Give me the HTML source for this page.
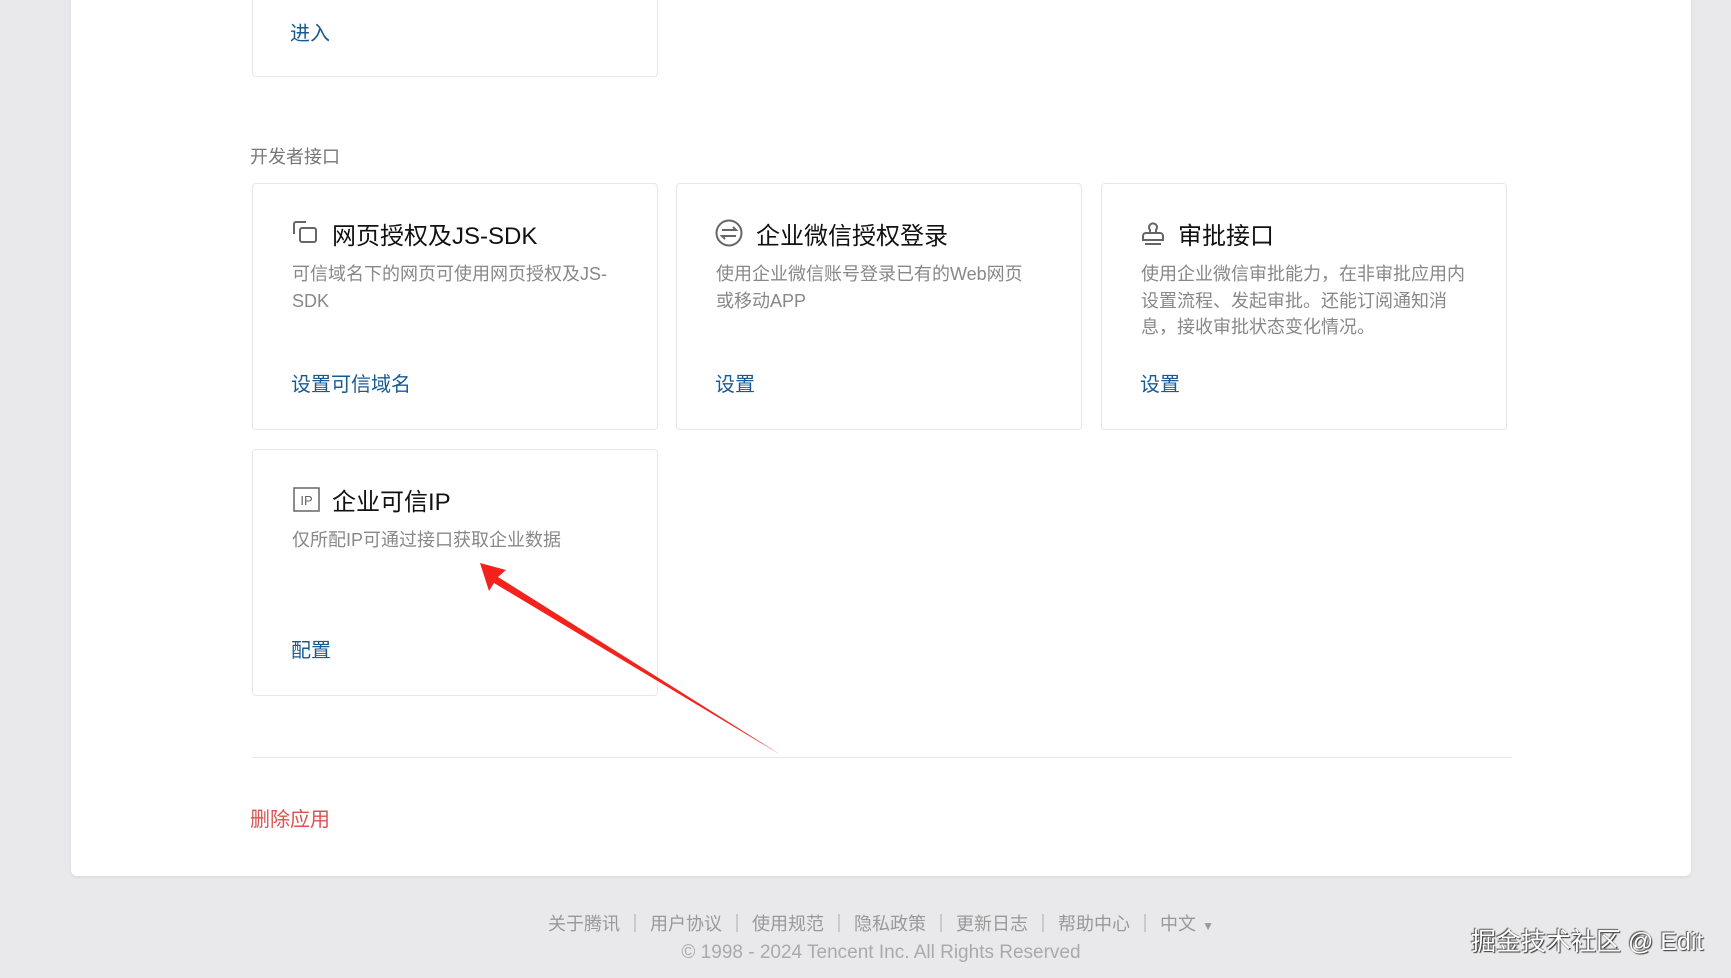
<!DOCTYPE html>
<html><head><meta charset="utf-8"><style>
*{margin:0;padding:0;box-sizing:border-box}
body{width:1731px;height:978px;background:#e9e9eb;position:relative;overflow:hidden;font-family:"Liberation Sans","Noto Sans CJK SC",sans-serif}
.panel{position:absolute;left:71px;top:-10px;width:1620px;height:886px;background:#fff;border-radius:6px;box-shadow:0 1px 3px rgba(0,0,0,.08)}
.card{position:absolute;width:406px;height:247px;border:1px solid #e4e6e9;border-radius:4px;background:#fff}
.t{position:absolute;left:38px;top:33px;font-size:24px;color:#111;display:flex;align-items:center;height:32px;white-space:nowrap}
.t svg{margin-right:12px}
.d{position:absolute;left:39px;top:77px;width:327px;font-size:18px;line-height:26.5px;color:#888}
.l{position:absolute;left:38px;top:184px;font-size:20px;color:#1a5a93}
.abs{position:absolute;white-space:nowrap}
</style></head><body>
<div class="panel"></div>
<div class="card" style="left:252px;top:-10px;height:87px"><div class="l" style="top:26px;left:37px">进入</div></div>
<div class="abs" style="left:250px;top:143px;font-size:18px;color:#777">开发者接口</div>

<div class="card" style="left:252px;top:183px">
<div class="t"><svg width="29" height="26" viewBox="0 0 29 26" fill="none" stroke="#666" stroke-width="2"><path d="M3 14V4a2 2 0 0 1 2-2h10"/><path d="M9 20V10a2 2 0 0 1 2-2h12a2 2 0 0 1 2 2v10a2 2 0 0 1-2 2H11"/><path d="M9 20a2 2 0 0 0 2 2"/></svg>网页授权及JS-SDK</div>
<div class="d">可信域名下的网页可使用网页授权及JS-SDK</div>
<div class="l">设置可信域名</div></div>

<div class="card" style="left:676px;top:183px">
<div class="t"><svg width="29" height="28" viewBox="0 0 29 28" fill="none" stroke="#666" stroke-width="2"><circle cx="14" cy="14" r="12.5"/><path d="M7 11h14l-3-3M21 17H7l3 3"/></svg>企业微信授权登录</div>
<div class="d">使用企业微信账号登录已有的Web网页<br>或移动APP</div>
<div class="l">设置</div></div>

<div class="card" style="left:1101px;top:183px">
<div class="t"><svg width="26" height="28" viewBox="0 0 26 28" fill="none" stroke="#666" stroke-width="2"><path d="M10 14V11a4 4 0 1 1 6 0v3"/><path d="M3 21v-4a3 3 0 0 1 3-3h14a3 3 0 0 1 3 3v4z"/><path d="M5 25h16"/></svg>审批接口</div>
<div class="d">使用企业微信审批能力，在非审批应用内设置流程、发起审批。还能订阅通知消息，接收审批状态变化情况。</div>
<div class="l">设置</div></div>

<div class="card" style="left:252px;top:449px">
<div class="t"><svg width="29" height="26" viewBox="0 0 29 26"><rect x="3" y="2" width="25" height="23" fill="none" stroke="#666" stroke-width="1.5"/><text x="15.5" y="19" font-size="13" text-anchor="middle" fill="#666" font-family="Liberation Sans">IP</text></svg>企业可信IP</div>
<div class="d">仅所配IP可通过接口获取企业数据</div>
<div class="l">配置</div></div>

<div class="abs" style="left:252px;top:757px;width:1260px;height:1px;background:#e4e6e9"></div>
<div class="abs" style="left:250px;top:803px;font-size:20px;color:#d9534f">删除应用</div>

<svg class="abs" style="left:0;top:0" width="1731" height="978"><polygon points="480,563 506,570 498,577 781,755 494,583 489,591" fill="#f4221c"/></svg>

<div class="abs" style="left:0;width:1762px;top:910px;text-align:center;font-size:18px;color:#999;word-spacing:1px">关于腾讯 ｜ 用户协议 ｜ 使用规范 ｜ 隐私政策 ｜ 更新日志 ｜ 帮助中心 ｜ 中文 <span style="font-size:12px">▼</span></div>
<div class="abs" style="left:0;width:1762px;top:942px;text-align:center;font-size:19px;color:#aaa">© 1998 - 2024 Tencent Inc. All Rights Reserved</div>
<div class="abs" style="left:1471px;top:922px;font-size:25px;color:#fff;text-shadow:1px 1px 1px #333,-1px -1px 1px #555">掘金技术社区 @ Edit</div>
</body></html>
